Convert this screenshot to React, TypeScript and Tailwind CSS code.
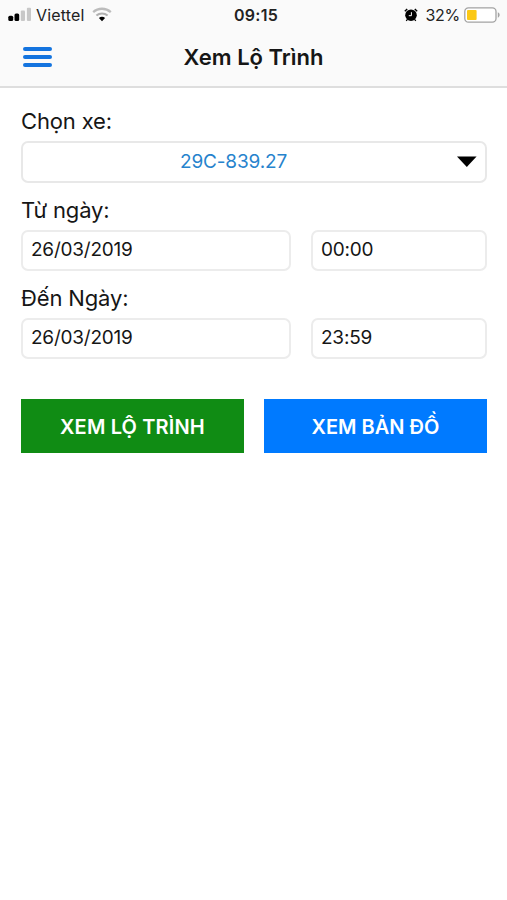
import React from 'react';

interface FieldProps {
    value: string;
    className?: string;
}

const SignalIcon: React.FC = () => (
    <svg className="w-[23px] h-[15px]" viewBox="0 0 23 15" aria-hidden="true">
        <rect x="0.3" y="8.8" width="4.9" height="5.2" rx="1.5" fill="#000" />
        <rect x="6.5" y="6.6" width="4.7" height="7.4" rx="1.5" fill="#000" />
        <rect x="12.8" y="3.4" width="4.2" height="10.6" rx="1" fill="#c8c8c8" />
        <rect x="18.9" y="0.8" width="4.1" height="13.2" rx="1" fill="#c8c8c8" />
    </svg>
);

const WifiIcon: React.FC = () => (
    <svg className="w-[20px] h-[15px]" viewBox="0 0 20 15" fill="none" aria-hidden="true">
        <path d="M1.2 5.2C6.2 .6 13.8 .6 18.8 5.2" stroke="#bcbcbc" strokeWidth="2.3" />
        <path d="M4.4 8.6C7.6 5.7 12.4 5.7 15.6 8.6" stroke="#b0b0b0" strokeWidth="2" />
        <path d="M6.9 11.1C8.7 9.3 11.3 9.3 13.1 11.1L10 14.3Z" fill="#000" />
    </svg>
);

const AlarmIcon: React.FC = () => (
    <svg className="w-[14px] h-[14px]" viewBox="0 0 14 14" fill="none" aria-hidden="true">
        <circle cx="7" cy="7.2" r="5.8" fill="#000" />
        <path d="M.8 3.2L3.2 1M13.2 3.2L10.8 1" stroke="#000" strokeWidth="1.4" />
        <path d="M3.2 11.6L2.2 12.8M10.8 11.6L11.8 12.8" stroke="#000" strokeWidth="1.3" />
        <path d="M7.4 4.2V7.7H4.8" stroke="#fff" strokeWidth="1" />
    </svg>
);

const BatteryIcon: React.FC = () => (
    <svg className="w-[37px] h-[16px]" viewBox="0 0 37 16" fill="none" aria-hidden="true">
        <rect x=".8" y=".8" width="31.2" height="14.4" rx="3.6" fill="#fff" stroke="#a3a3a3" strokeWidth="1.3" />
        <rect x="3" y="3" width="9.6" height="10" rx="1" fill="#fbc814" />
        <path d="M33.8 5.3C36.2 6 36.2 10 33.8 10.7Z" fill="#a3a3a3" />
    </svg>
);

const StatusBar: React.FC = () => (
    <div className="grid grid-cols-3 items-center h-[29px] pl-2 pr-[6px] text-[16px] text-[#222]">
        <div className="flex items-center">
            <SignalIcon />
            <span className="ml-[5px] tracking-[0.15px]">Viettel</span>
            <span className="ml-[8px]"><WifiIcon /></span>
        </div>
        <div className="pl-[3px] text-center font-semibold tracking-[0.3px]">09:15</div>
        <div className="flex items-center justify-end">
            <AlarmIcon />
            <span className="ml-[8px] mr-[4px] tracking-[-0.3px]">32%</span>
            <BatteryIcon />
        </div>
    </div>
);

const Label: React.FC<{ children: React.ReactNode }> = ({ children }) => (
    <div className="h-[33.5px] pt-[0.5px] text-[22px] leading-[27px] tracking-[-0.15px]">{children}</div>
);

const Field: React.FC<FieldProps> = ({ value, className = '' }) => (
    <div className={`flex items-center h-[41px] pl-[8px] pt-px rounded-[7px] border-2 border-[#ececec] text-[19px] tracking-[-0.22px] ${className}`}>
        {value}
    </div>
);

const App: React.FC = () => {
    return (
        <div className="min-h-screen bg-white text-[#161616] font-['Inter','Noto_Sans',sans-serif]">
            <header className="h-[88px] bg-[#fafafa] border-b-2 border-[#dedede]">
                <StatusBar />
                <div className="grid grid-cols-[60px_1fr_60px] items-center h-[56px]">
                    <button aria-label="Menu" className="ml-[23px] flex flex-col gap-[4px] w-[29px]">
                        <span className="h-1 rounded-sm bg-[#1474df]" />
                        <span className="h-1 rounded-sm bg-[#1474df]" />
                        <span className="h-1 rounded-sm bg-[#1474df]" />
                    </button>
                    <h1 className="pt-px text-center text-[22px] font-semibold">Xem Lộ Trình</h1>
                </div>
            </header>

            <main className="pl-[21px] pr-[20px] pt-[19.5px]">
                <Label>Chọn xe:</Label>
                <div className="flex items-center h-[41.5px] pr-[8px] rounded-[7px] border-2 border-[#e8e8e8]">
                    <span className="flex-1 pr-[13px] text-center text-[19px] tracking-[-0.15px] text-[#2683cd]">29C-839.27</span>
                    <svg className="w-5 h-[11px]" viewBox="0 0 20 11" aria-hidden="true">
                        <path d="M0 .5H19.6L9.8 11Z" fill="#000" />
                    </svg>
                </div>

                <div className="pt-[13.5px]">
                    <Label>Từ ngày:</Label>
                    <div className="flex gap-5">
                        <Field value="26/03/2019" className="w-[270px]" />
                        <Field value="00:00" className="flex-1" />
                    </div>
                </div>

                <div className="pt-[13.5px]">
                    <Label>Đến Ngày:</Label>
                    <div className="flex gap-5">
                        <Field value="26/03/2019" className="w-[270px]" />
                        <Field value="23:59" className="flex-1" />
                    </div>
                </div>

                <div className="grid grid-cols-2 gap-5 mt-10 text-[20px] font-semibold text-white">
                    <button className="h-[54px] pt-[2px] bg-[#108c14] tracking-[0.15px]">XEM LỘ TRÌNH</button>
                    <button className="h-[54px] pt-[2px] bg-[#007aff]">XEM BẢN ĐỒ</button>
                </div>
            </main>
        </div>
    );
};

export default App;
